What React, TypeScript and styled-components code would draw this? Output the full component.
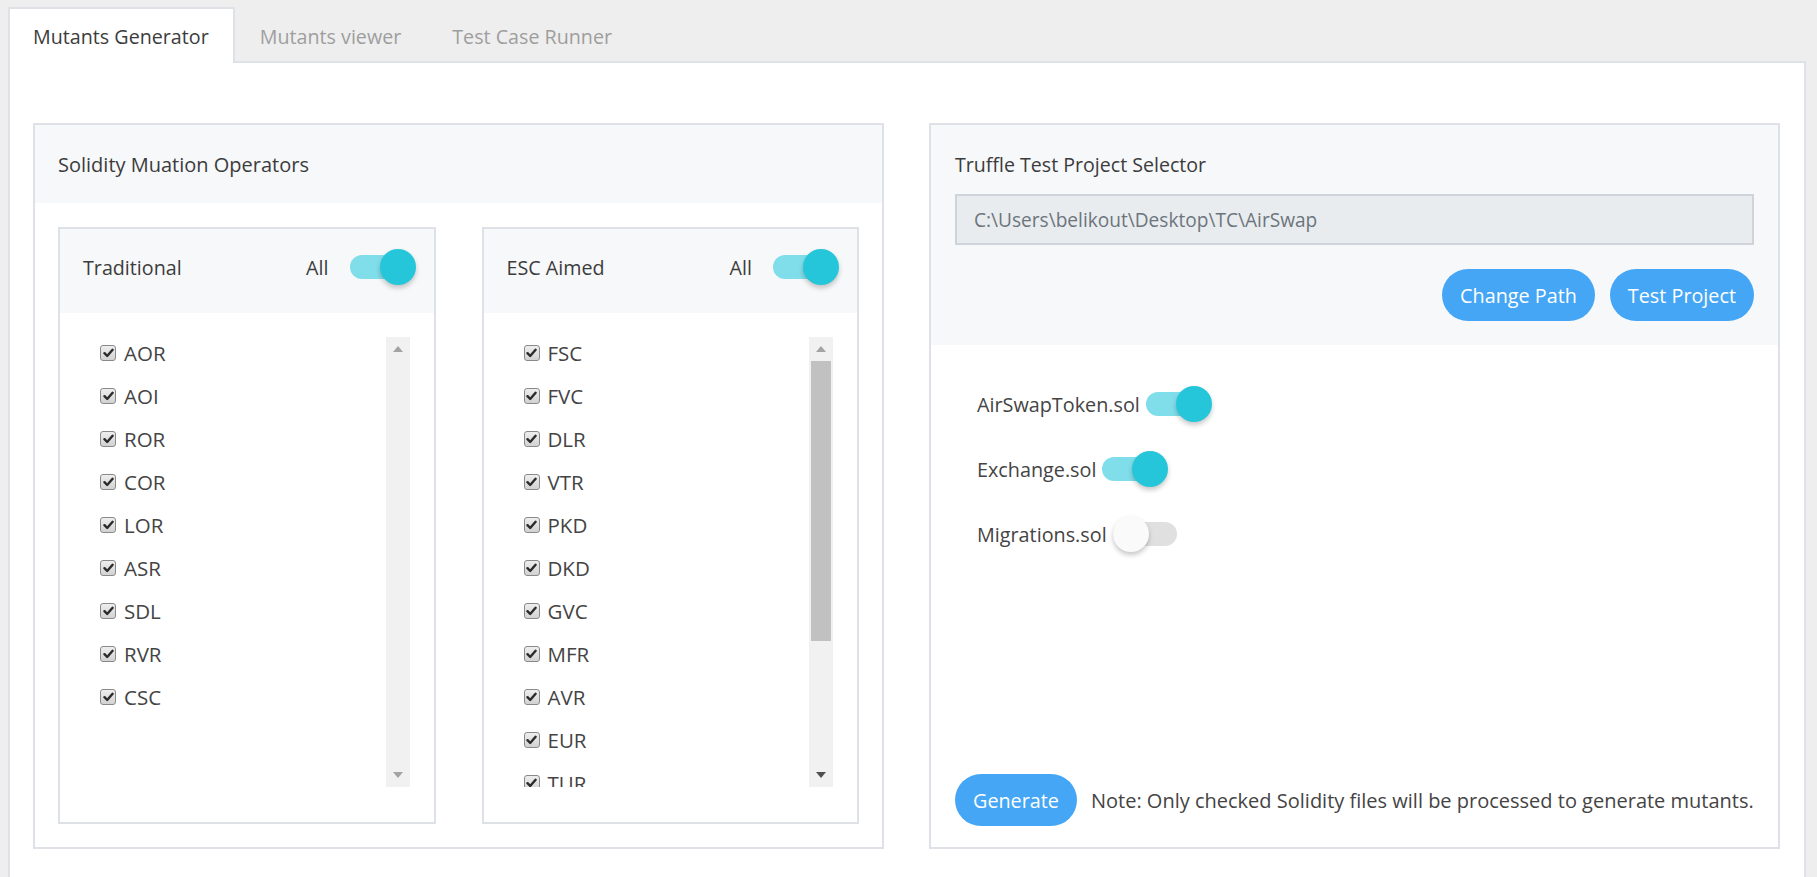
import React from 'react';
import styled, { createGlobalStyle } from 'styled-components';

const GlobalStyle = createGlobalStyle`
  html, body { margin: 0; padding: 0; background: #eeeeee; }
  body { font-family: "Open Sans", "Noto Sans", sans-serif; color: #3c3c3c; }
  * { box-sizing: border-box; }
`;

const Page = styled.div`
  padding: 7px 11px 0 8px;
  min-height: 877px;
  display: flex;
  flex-direction: column;
`;

const TabBar = styled.nav`
  display: flex;
  height: 56px;
  margin-bottom: -2px;
  position: relative;
  z-index: 1;
`;

const Tab = styled.div<{ $active?: boolean }>`
  display: flex;
  align-items: center;
  padding: 0 24px 0 23px;
  font-size: 19.7px;
  border: 2px solid ${p => (p.$active ? '#dee2e6' : 'transparent')};
  border-bottom: none;
  background: ${p => (p.$active ? '#ffffff' : 'transparent')};
  color: ${p => (p.$active ? '#3c3c3c' : '#9e9e9e')};
`;

const Panel = styled.main`
  flex: 1;
  background: #ffffff;
  border: 2px solid #dee2e6;
  border-bottom: none;
  padding: 60px 24px 0 23px;
  display: grid;
  grid-template-columns: 1fr 1fr;
  column-gap: 45px;
  align-items: start;
`;

const Card = styled.section`
  height: 726px;
  border: 2px solid #dee2e6;
  background: #ffffff;
  display: flex;
  flex-direction: column;
`;

const CardHeader = styled.div`
  height: 78px;
  background: #f7f8fa;
  display: flex;
  align-items: center;
  padding: 0 23px;
  font-size: 20px;
`;

const OperatorsBody = styled.div`
  padding: 24px 23px 23px 23px;
  display: grid;
  grid-template-columns: 1fr 1fr;
  column-gap: 46px;
`;

const Box = styled.div`
  border: 2px solid #dee2e6;
  display: flex;
  flex-direction: column;
`;

const BoxHeader = styled.div`
  height: 84px;
  background: #f7f8fa;
  display: flex;
  align-items: center;
  justify-content: space-between;
  padding: 0 18px 8px 23px;
  font-size: 19.7px;
`;

const AllGroup = styled.div`
  display: flex;
  align-items: center;
  gap: 21px;
`;

const Switch = styled.span<{ $on: boolean }>`
  position: relative;
  display: inline-block;
  flex: none;
  width: 66px;
  height: 36px;
  &::before {
    content: '';
    position: absolute;
    left: 0;
    top: 6px;
    width: 64px;
    height: 24px;
    border-radius: 12px;
    background: ${p => (p.$on ? '#80deea' : '#e0e0e0')};
  }
  &::after {
    content: '';
    position: absolute;
    top: 0;
    left: ${p => (p.$on ? '30px' : '0px')};
    width: 36px;
    height: 36px;
    border-radius: 50%;
    background: ${p => (p.$on ? '#26c6da' : '#fafafa')};
    box-shadow: 0 3px 5px rgba(0, 0, 0, 0.22);
  }
`;

const BoxBody = styled.div`
  padding: 24px 24px 35px 24px;
  display: flex;
  height: 509px;
`;

const List = styled.ul`
  flex: 1;
  margin: 0;
  padding: 0 0 0 16px;
  list-style: none;
  overflow: hidden;
`;

const Item = styled.li`
  display: flex;
  align-items: center;
  gap: 8px;
  height: 32px;
  margin-bottom: 11px;
  font-size: 20.5px;
  color: #444;
`;

const CheckBox = styled.span`
  width: 16px;
  height: 16px;
  flex: none;
  border: 1px solid #8a8a8a;
  border-radius: 3px;
  background: linear-gradient(#eeeeee, #d2d2d2);
  display: flex;
  align-items: center;
  justify-content: center;
`;

const ScrollBar = styled.div`
  width: 24px;
  flex: none;
  background: #f1f1f1;
  display: flex;
  flex-direction: column;
`;

const ScrollBtn = styled.div`
  height: 24px;
  flex: none;
  display: flex;
  align-items: center;
  justify-content: center;
`;

const Arrow = styled.span<{ $down?: boolean; $dark?: boolean }>`
  width: 0;
  height: 0;
  border-left: 5.5px solid transparent;
  border-right: 5.5px solid transparent;
  ${p => (p.$down ? 'border-top' : 'border-bottom')}: 6px solid ${p => (p.$dark ? '#505050' : '#a3a3a3')};
`;

const ScrollTrack = styled.div`
  flex: 1;
  padding: 0 2px;
`;

const Thumb = styled.div`
  background: #c1c1c1;
`;

const SelectorHeader = styled.div`
  background: #f7f8fa;
  padding: 27px 24px 24px 24px;
  display: flex;
  flex-direction: column;
`;

const Title = styled.div`
  font-size: 19.6px;
  line-height: 26px;
`;

const PathInput = styled.div`
  margin-top: 16px;
  height: 51px;
  border: 2px solid #ced4da;
  background: #e9ecef;
  display: flex;
  align-items: center;
  padding-left: 17px;
  font-size: 19.1px;
  color: #6c757d;
`;

const ButtonRow = styled.div`
  margin-top: 24px;
  display: flex;
  justify-content: flex-end;
  gap: 15px;
`;

const PillButton = styled.button`
  height: 52px;
  border: none;
  border-radius: 26px;
  background: #44a6f5;
  color: #ffffff;
  font-family: inherit;
  font-size: 19.8px;
  padding: 0 18px;
  cursor: pointer;
`;

const FilesBody = styled.div`
  flex: 1;
  padding: 41px 24px 21px 24px;
  display: flex;
  flex-direction: column;
`;

const FileList = styled.div`
  padding-left: 22px;
  display: flex;
  flex-direction: column;
  gap: 29px;
`;

const FileRow = styled.div`
  display: flex;
  align-items: center;
  gap: 6px;
  height: 36px;
  font-size: 19.8px;
  color: #444;
`;

const Footer = styled.div`
  margin-top: auto;
  display: flex;
  align-items: center;
  gap: 14px;
`;

const Note = styled.span`
  font-size: 20px;
  color: #444;
`;

const traditional = ['AOR', 'AOI', 'ROR', 'COR', 'LOR', 'ASR', 'SDL', 'RVR', 'CSC'];
const escAimed = ['FSC', 'FVC', 'DLR', 'VTR', 'PKD', 'DKD', 'GVC', 'MFR', 'AVR', 'EUR', 'TUR'];

const Check = () => (
  <CheckBox>
    <svg width="11" height="10" viewBox="0 0 11 10">
      <path d="M1.5 5.2 L4.2 8 L9.6 1.8" fill="none" stroke="#2b2b2b" strokeWidth="2.4" strokeLinecap="round" strokeLinejoin="round" />
    </svg>
  </CheckBox>
);

const OperatorBox = ({ title, items, scrollable }: { title: string; items: string[]; scrollable?: boolean }) => (
  <Box>
    <BoxHeader>
      <span>{title}</span>
      <AllGroup>
        <span>All</span>
        <Switch $on />
      </AllGroup>
    </BoxHeader>
    <BoxBody>
      <List>
        {items.map(it => (
          <Item key={it}>
            <Check />
            {it}
          </Item>
        ))}
      </List>
      <ScrollBar>
        <ScrollBtn>
          <Arrow />
        </ScrollBtn>
        <ScrollTrack>{scrollable && <Thumb style={{ height: 280 }} />}</ScrollTrack>
        <ScrollBtn>
          <Arrow $down $dark={scrollable} />
        </ScrollBtn>
      </ScrollBar>
    </BoxBody>
  </Box>
);

const files: { name: string; on: boolean }[] = [
  { name: 'AirSwapToken.sol', on: true },
  { name: 'Exchange.sol', on: true },
  { name: 'Migrations.sol', on: false },
];

export default function App() {
  return (
    <>
      <GlobalStyle />
      <Page>
        <TabBar>
          <Tab $active>Mutants Generator</Tab>
          <Tab>Mutants viewer</Tab>
          <Tab>Test Case Runner</Tab>
        </TabBar>
        <Panel>
          <Card>
            <CardHeader>Solidity Muation Operators</CardHeader>
            <OperatorsBody>
              <OperatorBox title="Traditional" items={traditional} />
              <OperatorBox title="ESC Aimed" items={escAimed} scrollable />
            </OperatorsBody>
          </Card>
          <Card>
            <SelectorHeader>
              <Title>Truffle Test Project Selector</Title>
              <PathInput>C:\Users\belikout\Desktop\TC\AirSwap</PathInput>
              <ButtonRow>
                <PillButton>Change Path</PillButton>
                <PillButton>Test Project</PillButton>
              </ButtonRow>
            </SelectorHeader>
            <FilesBody>
              <FileList>
                {files.map(f => (
                  <FileRow key={f.name}>
                    {f.name}
                    <Switch $on={f.on} />
                  </FileRow>
                ))}
              </FileList>
              <Footer>
                <PillButton>Generate</PillButton>
                <Note>Note: Only checked Solidity files will be processed to generate mutants.</Note>
              </Footer>
            </FilesBody>
          </Card>
        </Panel>
      </Page>
    </>
  );
}
